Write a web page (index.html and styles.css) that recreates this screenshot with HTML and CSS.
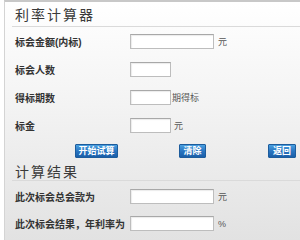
FILE: index.html
```html
<!DOCTYPE html>
<html lang="zh-CN">
<head>
  <meta charset="UTF-8" />
  <title>利率计算器</title>
  <link rel="stylesheet" href="styles.css">
</head>
<body>
  <div class="panel">
    <h2 class="title">利率计算器</h2>
    <form class="calc">
      <div class="row">
        <label for="amount">标会金额(内标)</label>
        <input class="wide" id="amount" type="text" />
        <span class="unit">元</span>
      </div>
      <div class="row">
        <label for="people">标会人数</label>
        <input class="short" id="people" type="text" />
      </div>
      <div class="row">
        <label for="period">得标期数</label>
        <input class="short" id="period" type="text" />
        <span class="unit tight">期得标</span>
      </div>
      <div class="row">
        <label for="money">标金</label>
        <input class="short" id="money" type="text" />
        <span class="unit mid">元</span>
      </div>
      <div class="actions">
        <button type="button" class="btn start">开始试算</button>
        <button type="reset" class="btn clear">清除</button>
        <button type="button" class="btn back">返回</button>
      </div>
    </form>

    <h2 class="title result-title">计算结果</h2>
    <div class="result">
      <div class="row">
        <label for="total">此次标会总会款为</label>
        <input class="wide" id="total" type="text" />
        <span class="unit">元</span>
      </div>
      <div class="row">
        <label for="rate">此次标会结果，年利率为</label>
        <input class="wide" id="rate" type="text" />
        <span class="unit">%</span>
      </div>
    </div>
  </div>
</body>
</html>
```

FILE: styles.css
```css
body {
  margin: 0;
  font-family: "Liberation Sans", "Noto Sans CJK SC", sans-serif;
  background: #fff;
}

.panel {
  margin-left: 4px;
  height: 238px;
  border-top: 2px solid #c8c8c8;
  border-left: 1px solid #d4d4d4;
  background: linear-gradient(#ffffff, #f4f4f4 40%, #e2e2e2);
  overflow: hidden;
}

.title {
  margin: 0 0 0 7px;
  padding: 3px 0 0 3px;
  height: 21px;
  font-family: "Noto Sans CJK SC", sans-serif;
  font-size: 14px;
  line-height: 18px;
  font-weight: normal;
  letter-spacing: 2px;
  color: #3a3a3a;
  border-bottom: 1px solid #dadada;
}

.result-title {
  padding-top: 0;
  height: 18px;
  line-height: 18px;
}

.row {
  display: flex;
  align-items: center;
  height: 28px;
  padding-left: 10px;
}

.result {
  margin-top: 2px;
}

.result .row {
  height: 27px;
}

label {
  width: 115px;
  flex-shrink: 0;
  white-space: nowrap;
  font-size: 10px;
  font-weight: bold;
  color: #333;
}

input {
  box-sizing: border-box;
  height: 15px;
  padding: 0 2px;
  border: 1px solid #bdbdbd;
  border-top-color: #a8a8a8;
  background: #fff;
  box-shadow: inset 1px 1px 1px rgba(0, 0, 0, 0.08);
}

.wide {
  width: 84px;
}

.short {
  width: 41px;
}

.unit {
  margin-left: 4px;
  font-size: 9px;
  color: #555;
}

.unit.tight {
  margin-left: 1px;
}

.unit.mid {
  margin-left: 3px;
}

.actions {
  display: flex;
  align-items: center;
  height: 23px;
  padding-left: 70px;
}

.btn {
  height: 14px;
  padding: 0;
  font-family: "Noto Sans CJK SC", sans-serif;
  font-size: 9px;
  font-weight: bold;
  line-height: 12px;
  color: #fff;
  border: 1px solid #1d5c9c;
  border-radius: 1px;
  background: linear-gradient(#4aa0e0, #2a76c2 50%, #1a5ea8);
  cursor: pointer;
}

.start {
  width: 43px;
}

.clear {
  width: 27px;
  margin-left: 61px;
}

.back {
  width: 28px;
  margin-left: 62px;
}
```
